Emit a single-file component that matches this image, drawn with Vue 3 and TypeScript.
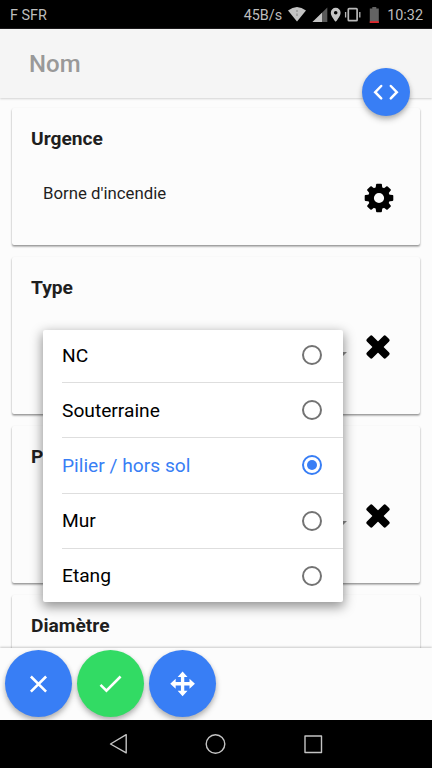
<script setup lang="ts">
import { ref } from 'vue'

interface Card {
  title: string
  kind: 'first' | 'select' | 'last'
  value?: string
}

const cards: Card[] = [
  { title: 'Urgence', kind: 'first', value: "Borne d'incendie" },
  { title: 'Type', kind: 'select' },
  { title: 'P', kind: 'select' },
  { title: 'Diamètre', kind: 'last' },
]

const options: string[] = ['NC', 'Souterraine', 'Pilier / hors sol', 'Mur', 'Etang']
const selected = ref<string>('Pilier / hors sol')
</script>

<template>
  <div class="screen">
    <div class="status">
      <span class="carrier">F SFR</span>
      <span class="speed">45B/s</span>
      <svg class="status-icons" viewBox="288 0 92 28" aria-hidden="true">
        <path d="M288 10.600Q297 3.600 306 10.600L297 21.600Z" fill="#c4c4c4" />
        <path d="M297 10v2M297 13.500v2.500" stroke="#999" stroke-width="1.500" />
        <path d="M312.500 22L327.300 7.600V22Z" fill="#5a5a5a" />
        <path d="M312.500 22L322 12.800V22Z" fill="#c4c4c4" />
        <path fill-rule="evenodd" d="M335.700 7.800a4.900 4.900 0 0 1 4.900 4.900c0 3.500-4.900 9.100-4.900 9.100S330.800 16.200 330.800 12.700A4.900 4.900 0 0 1 335.700 7.800Zm0 3.100a1.800 1.800 0 1 0 0 3.600 1.800 1.800 0 0 0 0-3.600Z" fill="#c4c4c4" />
        <rect x="348.300" y="8.700" width="8.800" height="12" rx=".8" fill="none" stroke="#b8b8b8" stroke-width="1.700" />
        <path d="M345.600 12v5.500M359.800 12v5.500" stroke="#b8b8b8" stroke-width="1.300" />
        <path d="M369.800 8.500h2.500V7h4v1.500h2.500V23h-9Z" fill="#636363" />
        <path d="M369.800 21.200h9V23h-9Z" fill="#e2262c" />
      </svg>
      <span class="clock">10:32</span>
    </div>

    <header class="header">
      <h1>Nom</h1>
      <button class="fab fab-code" aria-label="Code">
        <svg viewBox="0 0 48 48"><path d="m19.200 18-6 6.200 6 6.200M28.800 18l6 6.200-6 6.200" fill="none" stroke="#fff" stroke-width="2.500" stroke-linecap="round" /></svg>
      </button>
    </header>

    <main class="content">
      <section v-for="card in cards" :key="card.title" class="card" :class="card.kind">
        <h2>{{ card.title }}</h2>
        <div v-if="card.kind === 'first'" class="line">
          <span>{{ card.value }}</span>
          <svg class="gear" viewBox="-15 -15 30 30">
            <circle r="8" fill="none" stroke="#000" stroke-width="5.800" />
            <path v-for="n in 8" :key="n" :transform="`rotate(${n * 45})`" d="M-3.500-8.800-2.900-13.600q.1-.7.800-.7h4.200q.7 0 .8.700L3.500-8.800Z" />
          </svg>
        </div>
        <div v-if="card.kind === 'select'" class="select-line">
          <i class="caret"></i>
          <svg class="cross" viewBox="-12 -12 24 24">
            <rect x="-13.500" y="-4" width="27" height="8" rx="1.800" transform="rotate(45)" />
            <rect x="-13.500" y="-4" width="27" height="8" rx="1.800" transform="rotate(-45)" />
          </svg>
        </div>
      </section>
    </main>

    <footer class="footer">
      <button class="fab big" aria-label="Annuler">
        <svg viewBox="0 0 68 68"><path d="m26.200 26.800 15.400 15.400m0-15.400-15.400 15.400" fill="none" stroke="#fff" stroke-width="2.600" /></svg>
      </button>
      <button class="fab big green" aria-label="Valider">
        <svg viewBox="0 0 68 68"><path d="m23.800 35.300 6 5.800L44.100 26.800" fill="none" stroke="#fff" stroke-width="2.600" /></svg>
      </button>
      <button class="fab big" aria-label="Déplacer">
        <svg viewBox="0 0 68 68"><path d="M34 21.700 39 27.200h-3.300v5.300H41V29.200l5.500 5L41 39.200v-3.300h-5.300V41.200H39l-5 5.500L29 41.200h3.300v-5.300H27V39.200l-5.500-5L27 29.200v3.300h5.300V27.200H29Z" fill="#fff" /></svg>
      </button>
    </footer>

    <nav class="nav">
      <svg viewBox="0 0 432 48" fill="none" stroke="#c4c4c4" stroke-width="1.400" stroke-linejoin="round">
        <path d="M126.200 14.700v18.200L110.500 24Z" />
        <circle cx="215.500" cy="24" r="9.300" />
        <rect x="305" y="16" width="16.500" height="16.500" />
      </svg>
    </nav>

    <div class="popover" role="radiogroup">
      <div v-for="option in options" :key="option" class="option" :class="{ active: option === selected }" @click="selected = option">
        <span>{{ option }}</span>
        <i class="radio"></i>
      </div>
    </div>
  </div>
</template>

<style>
body {
  margin: 0;
}
</style>

<style scoped>
* {
  box-sizing: border-box;
}
.screen {
  position: relative;
  display: flex;
  flex-direction: column;
  width: 432px;
  height: 768px;
  overflow: hidden;
  background: #fcfcfc;
  font-family: Roboto, "Liberation Sans", sans-serif;
  color: #1f1f1f;
}
.status {
  flex: 0 0 29px;
  display: flex;
  align-items: center;
  padding: 3px 9px 0 10px;
  border-bottom: 1px solid #1c1a1c;
  background: #000;
  color: #bdbdbd;
  font-size: 14.400px;
  line-height: 25px;
}
.carrier {
  flex: 1;
}
.speed {
  margin-right: 6px;
}
.status-icons {
  width: 92px;
  height: 28px;
  margin: -3px 7px 0 0;
}
.header {
  position: relative;
  z-index: 2;
  flex: 0 0 69px;
  display: flex;
  align-items: center;
  padding: 1px 0 0 29px;
  background: #f5f5f5;
  box-shadow: 0 1px 2px rgba(0, 0, 0, 0.17);
}
h1 {
  margin: 0;
  font-size: 24px;
  line-height: 32px;
  font-weight: 500;
  color: #999;
}
.fab {
  display: block;
  padding: 0;
  border: 0;
  border-radius: 50%;
  background: #387ef5;
  box-shadow: 0 4px 6px rgba(0, 0, 0, 0.2), 0 2px 4px rgba(0, 0, 0, 0.15);
}
.fab svg {
  display: block;
  width: 100%;
  height: 100%;
}
.fab-code {
  position: absolute;
  left: 362.300px;
  top: 39.300px;
  width: 48px;
  height: 48px;
}
.content {
  flex: 1;
  min-height: 0;
  display: flex;
  flex-direction: column;
  gap: 12px;
  padding: 10px 12px 0;
  overflow: hidden;
}
.card {
  flex: 0 0 157.200px;
  padding: 19px 19px 0;
  border-radius: 2px;
  background: #fcfcfc;
  box-shadow: 0 2px 2px rgba(0, 0, 0, 0.2), 0 1px 2px rgba(0, 0, 0, 0.28);
}
.card.first {
  flex-basis: 136.500px;
}
h2 {
  margin: 0;
  font-size: 19.200px;
  line-height: 23px;
  font-weight: 700;
}
.line {
  display: flex;
  justify-content: space-between;
  align-items: center;
  padding: 32.500px 7px 0 12px;
  font-size: 16.800px;
}
.line span {
  margin-top: -9px;
}
.gear {
  width: 30px;
  height: 30px;
}
.select-line {
  display: flex;
  justify-content: flex-end;
  align-items: center;
  gap: 19.500px;
  padding: 36.800px 10.800px 0 0;
}
.caret {
  margin-top: 15px;
  border: 5px solid transparent;
  border-top: 5px solid #888;
  border-bottom: 0;
}
.cross {
  width: 24px;
  height: 24px;
  overflow: visible;
}
.footer {
  position: relative;
  flex: 0 0 72px;
  display: flex;
  gap: 4.800px;
  padding: 2px 4.800px 0;
  background: #fcfcfc;
  box-shadow: 0 -1px 2px rgba(0, 0, 0, 0.2);
}
.big {
  width: 67.200px;
  height: 67.200px;
}
.green {
  background: #32db64;
}
.nav {
  position: relative;
  flex: 0 0 48px;
  background: #000;
}
.nav svg {
  display: block;
  width: 432px;
  height: 48px;
}
.popover {
  position: absolute;
  z-index: 5;
  left: 43px;
  top: 329.500px;
  width: 300px;
  height: 272.500px;
  overflow: hidden;
  border-radius: 2px;
  background: #fff;
  box-shadow: 0 4px 12px 1px rgba(0, 0, 0, 0.42);
}
.option {
  display: flex;
  justify-content: space-between;
  align-items: center;
  height: 55.200px;
  margin-left: 19px;
  padding-right: 21px;
  border-bottom: 1px solid #dedede;
  color: #000;
  font-size: 19.200px;
}
.option:first-child {
  margin-top: -1.500px;
}
.option:last-child {
  border-color: transparent;
}
.option.active {
  color: #387ef5;
}
.radio {
  display: flex;
  width: 20px;
  height: 20px;
  border: 2px solid #737373;
  border-radius: 50%;
}
.active .radio {
  border-color: #387ef5;
}
.active .radio::after {
  content: "";
  width: 10px;
  height: 10px;
  margin: auto;
  border-radius: 50%;
  background: #387ef5;
}
</style>
